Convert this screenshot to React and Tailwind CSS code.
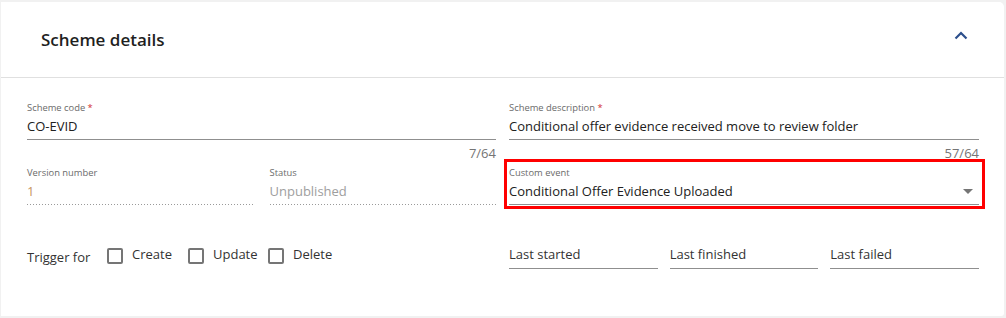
import React from "react";

const font = { fontFamily: '"Open Sans", "Noto Sans", sans-serif' };

function Label({ children, required }) {
  return (
    <div className="text-[9.4px] leading-[14px] text-[#6b6b6b]">
      {children}
      {required && <span className="text-[#d32f2f]"> *</span>}
    </div>
  );
}

function Checkbox({ label, width }) {
  return (
    <label className={`flex items-start ${width}`}>
      <span className="mt-[3px] w-4 h-4 border-2 border-[#757575] rounded-[2px] box-border shrink-0" />
      <span className="ml-[9px] text-[13px] text-[#333333] leading-[18px]">{label}</span>
    </label>
  );
}

function PlainField({ label }) {
  return (
    <div className="border-b border-[#8f8f8f] pt-[2px] pb-[5px] text-[13px] leading-[18px] text-[#333333]">
      {label}
    </div>
  );
}

function Dotted() {
  return <div className="h-px bg-[linear-gradient(to_right,#9a9a9a_1px,transparent_1px)] bg-[length:3px_1px] bg-repeat-x" />;
}

export default function App() {
  return (
    <div className="min-h-[318px] bg-[#f1f1f1] pt-[2px] pl-[1px]" style={font}>
      <div className="w-[1003px] h-[314px] bg-white rounded-tr-[5px] rounded-br-[3px]">
        <div className="h-[76px] flex items-center justify-between pl-[40px] pr-[36px] border-b border-[#e0e0e0]">
          <h2 className="text-[17px] leading-[24px] font-semibold text-[#1f1f1f] mt-[1px]">Scheme details</h2>
          <svg width="14" height="9" viewBox="0 0 14 9" className="-mt-[9px]">
            <path d="M1.5 7.5 L7 2 L12.5 7.5" fill="none" stroke="#2c4f8c" strokeWidth="2.2" />
          </svg>
        </div>

        <div className="pl-[26px] pr-[25px] pt-[23px] flex gap-[13px]">
          {/* left column */}
          <div className="w-[469px]">
            <div>
              <Label required>Scheme code</Label>
              <div className="mt-[2px] border-b border-[#8f8f8f] pb-[4px] text-[13px] leading-[18px] text-[#212121]">CO-EVID</div>
              <div className="text-right text-[13px] leading-[18px] text-[#757575] mt-[4px]">7/64</div>
            </div>
            <div className="grid grid-cols-2 gap-4 mt-[4px]">
              <div>
                <Label>Version number</Label>
                <div className="mt-[2px] pb-[4px] text-[13px] leading-[18px] text-[#c8965f]">1</div>
                <Dotted />
              </div>
              <div>
                <Label>Status</Label>
                <div className="mt-[2px] pb-[4px] text-[13px] leading-[18px] text-[#9e9e9e]">Unpublished</div>
                <Dotted />
              </div>
            </div>
            <div className="flex items-start mt-[40px]">
              <span className="text-[13px] text-[#333333] leading-[18px] mt-[3px] w-[80px]">Trigger for</span>
              <div className="flex items-start">
                <Checkbox label="Create" width="w-[81px]" />
                <Checkbox label="Update" width="w-[80px]" />
                <Checkbox label="Delete" width="w-[80px]" />
              </div>
            </div>
          </div>

          {/* right column */}
          <div className="w-[470px]">
            <div>
              <Label required>Scheme description</Label>
              <div className="mt-[2px] border-b border-[#8f8f8f] pb-[4px] text-[13px] leading-[18px] text-[#212121]">
                Conditional offer evidence received move to review folder
              </div>
              <div className="text-right text-[13px] leading-[18px] text-[#757575] mt-[4px]">57/64</div>
            </div>
            <div className="relative mt-[4px]">
              <Label>Custom event</Label>
              <div className="mt-[2px] pb-[4px] border-b border-[#8f8f8f] flex items-center justify-between text-[13px] leading-[18px] text-[#212121]">
                <span>Conditional Offer Evidence Uploaded</span>
                <svg width="10" height="5" viewBox="0 0 10 5" className="mr-[6px]">
                  <path d="M0 0 L10 0 L5 5 Z" fill="#757575" />
                </svg>
              </div>
              <div className="absolute -top-[7px] -bottom-[4px] -left-[5px] -right-[6px] border-[3px] border-[#ff0000] pointer-events-none" />
            </div>
            <div className="grid grid-cols-3 gap-3 mt-[38px]">
              <PlainField label="Last started" />
              <PlainField label="Last finished" />
              <PlainField label="Last failed" />
            </div>
          </div>
        </div>
      </div>
    </div>
  );
}
